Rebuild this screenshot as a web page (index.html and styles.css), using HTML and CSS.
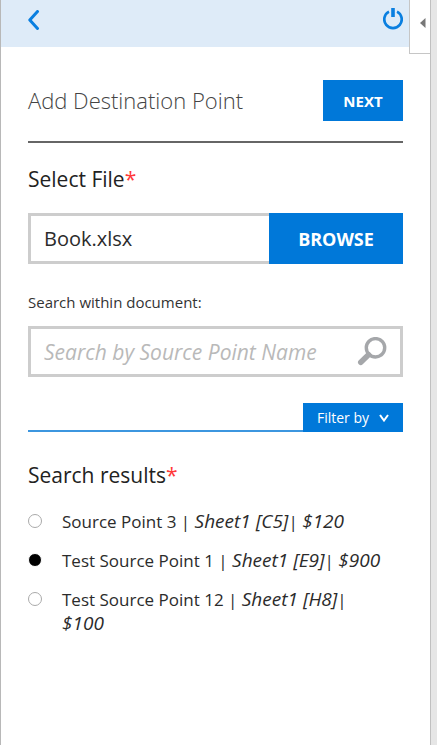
FILE: index.html
```html
<!DOCTYPE html>
<html lang="en">
<head>
<meta charset="utf-8">
<meta name="viewport" content="width=device-width, initial-scale=1">
<title>Add Destination Point</title>
<link rel="stylesheet" href="styles.css">
</head>
<body>
<div class="pane">
  <header class="topbar">
    <button class="icon-button" type="button" aria-label="Back">
      <svg width="12" height="20" viewBox="0 0 12 20"><path d="M9.500 1.500 1.800 10l7.700 8.500" fill="none" stroke="currentColor" stroke-width="3" stroke-linecap="round" stroke-linejoin="round"/></svg>
    </button>
    <button class="icon-button" type="button" aria-label="Sign out">
      <svg width="20" height="22" viewBox="0 0 20 22"><path d="M6 3.600A8.700 8.700 0 1 0 14 3.600" fill="none" stroke="currentColor" stroke-width="2.700"/><path d="M10 0v9" stroke="#deebf8" stroke-width="6.500"/><path d="M10 0v9" stroke="currentColor" stroke-width="3.600"/></svg>
    </button>
  </header>
  <button class="collapse" type="button" aria-label="Collapse pane">
    <svg width="6" height="10" viewBox="0 0 6 10"><path d="M5.500 0v10L0 5z" fill="currentColor"/></svg>
  </button>
  <main class="content">
    <div class="title-row">
      <h1 class="title">Add Destination Point</h1>
      <button class="primary next" type="button">NEXT</button>
    </div>
    <h2 class="section-title"><label for="file">Select File<span class="required">*</span></label></h2>
    <div class="field">
      <input class="field-input" id="file" type="text" value="Book.xlsx">
      <button class="primary browse" type="button">BROWSE</button>
    </div>
    <label class="caption" for="search">Search within document:</label>
    <div class="field search">
      <input class="field-input" id="search" type="text" placeholder="Search by Source Point Name">
      <button class="search-button" type="button" aria-label="Search">
        <svg width="30" height="30" viewBox="0 0 30 30"><circle cx="18.500" cy="10.800" r="9.200" fill="none" stroke="currentColor" stroke-width="3.400"/><path d="M11.500 17.800 3.800 25.200" stroke="currentColor" stroke-width="5.600" stroke-linecap="round"/></svg>
      </button>
    </div>
    <div class="filter-row">
      <button class="filter" type="button">Filter by
        <svg width="10" height="8" viewBox="0 0 10 8"><path d="M1 1l4 5.500L9 1" fill="none" stroke="currentColor" stroke-width="2"/></svg>
      </button>
    </div>
    <fieldset class="results">
      <legend class="section-title">Search results<span class="required">*</span></legend>
      <label class="result"><input class="radio" type="radio" name="point"><span>Source Point 3 | <em>Sheet1 [C5]</em>| <em>$120</em></span></label>
      <label class="result"><input class="radio" type="radio" name="point" checked><span>Test Source Point 1 | <em>Sheet1 [E9]</em>| <em>$900</em></span></label>
      <label class="result"><input class="radio" type="radio" name="point"><span>Test Source Point 12 | <em>Sheet1 [H8]</em>| <em>$100</em></span></label>
    </fieldset>
  </main>
</div>
</body>
</html>
```
FILE: styles.css
```css
* { box-sizing: border-box; }

body {
  margin: 0;
  padding-right: 6px;
  background: #e6e6e6;
  color: #2b2b2b;
  font-family: "Segoe UI", "Open Sans", "Noto Sans", sans-serif;
  font-size: 17px;
}

button, input { font: inherit; color: inherit; }
button { margin: 0; padding: 0; border: 0; background: none; cursor: pointer; }
svg { display: block; }

.pane {
  position: relative;
  min-height: 100vh;
  border-left: 1px solid #b8b8b8;
  border-right: 1px solid #c0c0c0;
  background: #fff;
}

.topbar {
  display: flex;
  justify-content: space-between;
  height: 47px;
  padding: 8px 27px 0;
  background: #deebf8;
}

.icon-button { align-self: flex-start; color: #0a7fe0; }
.icon-button:first-child { padding-top: 2px; }

.collapse {
  position: absolute;
  top: 0;
  right: 0;
  display: flex;
  align-items: center;
  justify-content: center;
  width: 21px;
  height: 54px;
  padding: 0 0 8px 6px;
  border: solid #c6c6c6;
  border-width: 0 0 1px 1px;
  background: #fff;
  color: #777;
}

.content { padding: 33px 27px; }

.title-row {
  display: flex;
  align-items: center;
  justify-content: space-between;
  padding-bottom: 20px;
  border-bottom: 2px solid #666;
}

.title {
  margin: 0;
  color: #444;
  font-size: 22px;
  font-weight: 300;
  line-height: 41px;
}

.primary { background: #0078d9; color: #fff; font-weight: 700; }
.next { width: 80px; height: 41px; font-size: 15px; }

.section-title {
  margin: 21px 0 18px;
  padding: 0;
  color: #222;
  font-size: 21px;
  font-weight: 400;
  line-height: 31px;
}

.required { color: #ff3838; }

.field {
  display: flex;
  height: 51px;
  border: 3px solid #cdcdcd;
}

.field-input {
  flex: 1;
  min-width: 0;
  padding: 0 13px;
  border: 0;
  outline: 0;
  background: none;
  font-size: 20px;
}

.field-input::placeholder { color: #b9b9b9; font-style: italic; opacity: 1; }
.search .field-input { padding-right: 0; font-size: 21px; }

.browse { width: 134px; margin: -3px; font-size: 18px; }

.caption {
  display: block;
  margin: 26px 0 12px;
  color: #333;
  font-size: 15px;
  line-height: 24px;
}

.search-button { padding-right: 13px; color: #a5a7aa; }

.filter-row {
  display: flex;
  justify-content: flex-end;
  margin-top: 26px;
  border-bottom: 2px solid #3c96df;
}

.filter {
  display: flex;
  align-items: center;
  justify-content: center;
  gap: 10px;
  width: 100px;
  height: 29px;
  margin-bottom: -2px;
  background: #0078d9;
  color: #fff;
  font-size: 14px;
}

.results { min-width: 0; margin: 28px 0 0; padding: 0; border: 0; }
.results .section-title { margin: 0 0 19px; }

.result {
  display: flex;
  gap: 20px;
  margin-bottom: 15px;
  padding-right: 18px;
  line-height: 24px;
}

.result em { font-size: 19px; line-height: 1; }

.radio {
  flex: none;
  appearance: none;
  width: 14px;
  height: 14px;
  margin: 4px 0 0;
  border: 1px solid #aaa;
  border-radius: 50%;
  background: #fff;
}

.radio:checked {
  border-color: #fff;
  background: #000;
}
```
